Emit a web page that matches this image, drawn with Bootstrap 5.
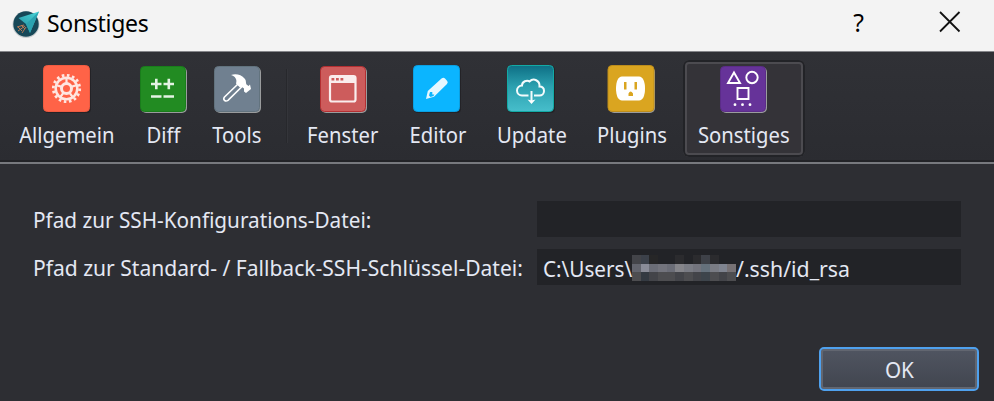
<!DOCTYPE html>
<html lang="de">
<head>
<meta charset="utf-8">
<title>Sonstiges</title>
<link href="https://cdn.jsdelivr.net/npm/bootstrap@5.3.0/dist/css/bootstrap.min.css" rel="stylesheet">
<style>
body{width:994px;height:401px;overflow:hidden;background:#2d2e33;color:#e4e8f3;font:22px/28px "Noto Sans","Open Sans",sans-serif}
svg{display:block;flex:none}
.titlebar{height:52px;background:#f3f3f3;border-bottom:1px solid #85868a;color:#000;padding-left:11px;padding-right:33px}
.app-icon{margin-top:-6px}
.title-text{font-size:23px;letter-spacing:-.3px;margin:-5px 0 0 6px}
.help{font-size:26px;margin-top:-7px;transform:scaleX(.95)}
.close-icon{margin:-8px 0 0 75px}
.toolstrip{height:112px;padding:8px 0 0 7px;background:linear-gradient(#303136,#2b2c31);border-bottom:2px solid #77797e;box-shadow:inset 0 -2px #222327}
.tool{height:97px;padding:5px 0 0;border:0;background:none;color:inherit;white-space:nowrap}
.tool svg{margin-bottom:7px}
.tool span{transform:scaleX(.92)}
.w-d span,.w-u span,.w-e span,.w-f span{margin-left:2px}
.tool.active{background:#343338;box-shadow:inset 0 0 0 2px #222327,inset 0 0 0 4px #4c4b50;border-radius:6px;padding-right:2px;margin-left:1px}
.w-a{width:119px}.w-b{width:74px}.w-c{width:98px}.w-d{width:90px}.w-u{width:97px}.w-e{width:103px}.w-f{width:122px}
.divider{width:2px;height:74px;margin:9px 6px 0 12px;background:#27282c;border-right:1px solid #34353a}
.fields{padding:37px 33px 0}
.field-row{height:36px;margin-bottom:12px}
.field-label{width:504px;white-space:nowrap}
.field-label span{display:inline-block;transform:scaleX(.942);transform-origin:left}
.field-label .key-label{transform:scaleX(.957)}
.field-box{background:#222327;padding:2px 0 0 6px;height:36px;white-space:nowrap}
.path-start{width:89px;transform:scaleX(.94);transform-origin:left}
.path-end{transform:scaleX(.967);transform-origin:left}
.ok-btn{width:160px;height:44px;margin:50px 15px 0 0;border:2px solid #4fa1ee;border-radius:5px;color:#e4e8f3;font-size:22px;line-height:38px;padding:0;background:linear-gradient(#505561,#41454f);box-shadow:inset 0 0 0 2px #626670}
.ok-btn span{display:inline-block;transform:scaleX(.94)}
</style>
<script src="https://cdn.jsdelivr.net/npm/bootstrap@5.3.0/dist/js/bootstrap.bundle.min.js"></script>
</head>
<body>
<header class="titlebar d-flex align-items-center">
  <svg class="app-icon" width="30" height="30" viewBox="0 0 30 30">
    <defs><linearGradient id="arrow" x1="1" y1="0" x2=".4" y2="1"><stop stop-color="#49d6d8"/><stop offset="1" stop-color="#2796a7"/></linearGradient></defs>
    <circle cx="15" cy="16.500" r="13.500" fill="#c9cdcf"/><circle cx="15" cy="16" r="12.700" fill="#174858"/>
    <path d="M28 3.500 7.500 10l7.500 6 4 9z" fill="url(#arrow)"/><path d="M28 3.500 15 16l4 9z" fill="#2ba3b0"/>
    <path d="m13 17-7 2m8-1-7 5m8-4-4 6m-4-6 4 4m-1-6 4 4" stroke="#b87955" stroke-width="1" fill="none"/>
  </svg>
  <span class="title-text">Sonstiges</span>
  <span class="help ms-auto">?</span>
  <svg class="close-icon" width="22" height="22" viewBox="0 0 22 22"><path d="m1 1 19.500 19.500m0-19.500L1 20.500" stroke="#111" stroke-width="1.800"/></svg>
</header>

<nav class="toolstrip d-flex align-items-start">
  <button class="tool w-a d-flex flex-column align-items-center"><svg width="48" height="48" viewBox="0 0 48 48">
    <rect x="1" y="1" width="47" height="47" rx="4" fill="#242327"/><rect x=".5" y=".5" width="46" height="46" rx="4" fill="#ff6347" stroke="#ef5a40"/>
    <g fill="none" stroke="#ffe6e1"><circle cx="23.500" cy="23.500" r="10.800" stroke-width="2.500"/><circle cx="23.500" cy="23.500" r="13.200" stroke-width="2.800" stroke-dasharray="2.600 2.584"/><circle cx="23.500" cy="23.500" r="5" stroke-width="3"/><path d="M23.500 12v6M13 20l5.800 1.900M34 20l-5.800 1.900M17 32.500l3.400-4.700M30 32.500l-3.400-4.700" stroke-width="2.200"/></g></svg><span>Allgemein</span></button>
  <button class="tool w-b d-flex flex-column align-items-center"><svg width="48" height="48" viewBox="0 0 48 48">
    <rect x="2" y="2" width="46" height="46" rx="5" fill="#9a9c9d"/><rect x="1.500" y="1.500" width="45" height="45" rx="4" fill="#228b22" stroke="#197d1b"/>
    <path d="M12 19h10.500m-5.200-5.200v10.500M24.500 19H35m-5.200-5.200v10.500M12 31.500h10.500m2 0H35" stroke="#e4f3e4" stroke-width="2.600"/></svg><span>Diff</span></button>
  <button class="tool w-b d-flex flex-column align-items-center"><svg width="48" height="48" viewBox="0 0 48 48">
    <rect x="2" y="2" width="46" height="46" rx="5" fill="#9a9c9d"/><rect x="1.500" y="1.500" width="45" height="45" rx="4" fill="#708090" stroke="#62737e"/>
    <path d="M25 19 11.500 32q-1.500 2 0 3.300t3.500 0L28.500 22z" fill="#708090" stroke="#fff" stroke-width="1.600"/><path d="M18 10c5-1.500 10-.5 14 4 1.500 2 .5 4 1.500 5.500l2 1.500 1.500-1.500 1 4.500-5 4-2-1.500v-3l-2-1.500-2 .5-4-4c1.500-4-1-7.500-5-8.500z" fill="#fff"/></svg><span>Tools</span></button>
  <div class="divider"></div>
  <button class="tool w-c d-flex flex-column align-items-center"><svg width="48" height="48" viewBox="0 0 48 48">
    <rect x="2" y="2" width="46" height="46" rx="5" fill="#9a9c9d"/><rect x="1.500" y="1.500" width="45" height="45" rx="4" fill="#cd5c5c" stroke="#b32f32"/>
    <rect x="11" y="11" width="25.500" height="25.500" rx="2" fill="none" stroke="#faeded" stroke-width="2.200"/><path d="M11 11h25.500v7H11z" fill="#faeded"/><path d="M12.500 14.300h2.800m1.700 0h2.800m1.700 0h2.800" stroke="#cd5c5c" stroke-width="2.500"/></svg><span>Fenster</span></button>
  <button class="tool w-d d-flex flex-column align-items-center"><svg width="48" height="48" viewBox="0 0 48 48">
    <rect x="1" y="1" width="47" height="47" rx="4" fill="#242327"/><rect x=".5" y=".5" width="46" height="46" rx="4" fill="#0bb5ff" stroke="#0aa0e2"/>
    <path d="m13 34 1.800-8L28.500 13.500q2-1.500 3.500 0l2 2.200q1.500 1.500 0 3.300L21 31.800z" fill="#e6f7ff"/><path d="m16 30.500 1-3.500h2.300v2.500h2l-.8 1.500-3 1z" fill="#0bb5ff"/></svg><span>Editor</span></button>
  <button class="tool w-u d-flex flex-column align-items-center"><svg width="48" height="48" viewBox="0 0 48 48">
    <defs><linearGradient id="teal" x2="0" y2="1"><stop stop-color="#0e6f85"/><stop offset=".45" stop-color="#2ba0af"/><stop offset="1" stop-color="#47becb"/></linearGradient></defs>
    <rect x="1" y="1" width="47" height="47" rx="4" fill="#242327"/><rect x=".5" y=".5" width="46" height="46" rx="4" fill="url(#teal)" stroke="#13aaa5"/>
    <g fill="none" stroke="#f3fbfc" stroke-width="2"><path d="M21.500 30.500H15a5 5 0 0 1-5-5c0-3 2.500-5 5-5 0-4 5-6 7.500-4 4-4 10.500-1 10 5 3 0 4.500 2 4.500 4.500a4.500 4.500 0 0 1-4.500 4.500H27M24.500 26v10"/></g><path d="m20.500 34.500 4 4.500 4-4.500-4 1z" fill="#fff"/></svg><span>Update</span></button>
  <button class="tool w-e d-flex flex-column align-items-center"><svg width="48" height="48" viewBox="0 0 48 48">
    <rect x="2" y="2" width="46" height="46" rx="5" fill="#9a9c9d"/><rect x="1" y=".5" width="46" height="46" rx="4" fill="#daa520" stroke="#bd8d1b"/>
    <path d="M15 11.500h17c4 0 6 5 6 12s-2 12-6 12H15c-4 0-6-5-6-12s2-12 6-12z" fill="#fff"/><path d="M17 17h2.500v7.500H17zm10.500 0H30v7.500h-2.500zM21.500 31v-2.500q2-4 4.500 0V31z" fill="#daa520"/></svg><span>Plugins</span></button>
  <button class="tool active w-f d-flex flex-column align-items-center"><svg width="48" height="48" viewBox="0 0 48 48">
    <rect x="2" y="2" width="46" height="46" rx="5" fill="#9a9c9d"/><rect x="1.500" y="1.500" width="45" height="45" rx="4" fill="#663399" stroke="#5b2c88"/>
    <g fill="none" stroke="#fff" stroke-width="1.900"><path d="m15 7.500 6 10.500H9z"/><circle cx="33" cy="12.500" r="5.700"/><path d="M18.500 23h11v11h-11z"/></g><g fill="#fff"><circle cx="16" cy="39.700" r="1.400"/><circle cx="23.500" cy="39.700" r="1.400"/><circle cx="31" cy="39.700" r="1.400"/></g></svg><span>Sonstiges</span></button>
</nav>

<main class="fields">
  <div class="field-row d-flex align-items-center"><label class="field-label"><span>Pfad zur SSH-Konfigurations-Datei:</span></label><div class="field-box flex-fill"></div></div>
  <div class="field-row d-flex align-items-center"><label class="field-label"><span class="key-label">Pfad zur Standard- / Fallback-SSH-Schlüssel-Datei:</span></label>
    <div class="field-box flex-fill d-flex align-items-center"><span class="path-start">C:\Users\</span>
      <svg width="104" height="26" viewBox="0 0 12 3" preserveAspectRatio="none" shape-rendering="crispEdges">
        <path fill="#434449" d="M0 0h1v1H0z"/><path fill="#3c414a" d="M1 0h1v1H1z"/><path fill="#262627" d="M2 0h1v1H2z"/><path fill="#2b2b2e" d="M5 0h1v1H5zM7 0h1v1H7zM9 0h1v1H9z"/><path fill="#3e4148" d="M8 0h1v1H8z"/>
        <path fill="#62646d" d="M0 1h1v1H0z"/><path fill="#8a8c98" d="M1 1h1v1H1z"/><path fill="#6b6d77" d="M2 1h1v1H2zM4 1h1v1H4z"/><path fill="#73747d" d="M3 1h1v1H3zM7 1h1v1H7z"/><path fill="#85858a" d="M5 1h1v1H5z"/><path fill="#7a7c84" d="M6 1h1v1H6zM9 1h1v1H9z"/><path fill="#65717c" d="M8 1h1v1H8z"/><path fill="#7f8490" d="M10 1h1v1h-1z"/><path fill="#777275" d="M11 1h1v1h-1z"/>
        <path fill="#4d4d50" d="M0 2h1v1H0zM3 2h2v1H3zM6 2h1v1H6zM9 2h1v1H9zM11 2h1v1h-1z"/><path fill="#343a42" d="M1 2h1v1H1z"/><path fill="#434449" d="M2 2h1v1H2zM5 2h1v1H5zM7 2h1v1H7zM10 2h1v1h-1z"/><path fill="#3d444b" d="M8 2h1v1H8z"/>
      </svg><span class="path-end">/.ssh/id_rsa</span></div></div>
</main>
<footer class="d-flex justify-content-end"><button class="btn ok-btn"><span>OK</span></button></footer>
</body>
</html>
